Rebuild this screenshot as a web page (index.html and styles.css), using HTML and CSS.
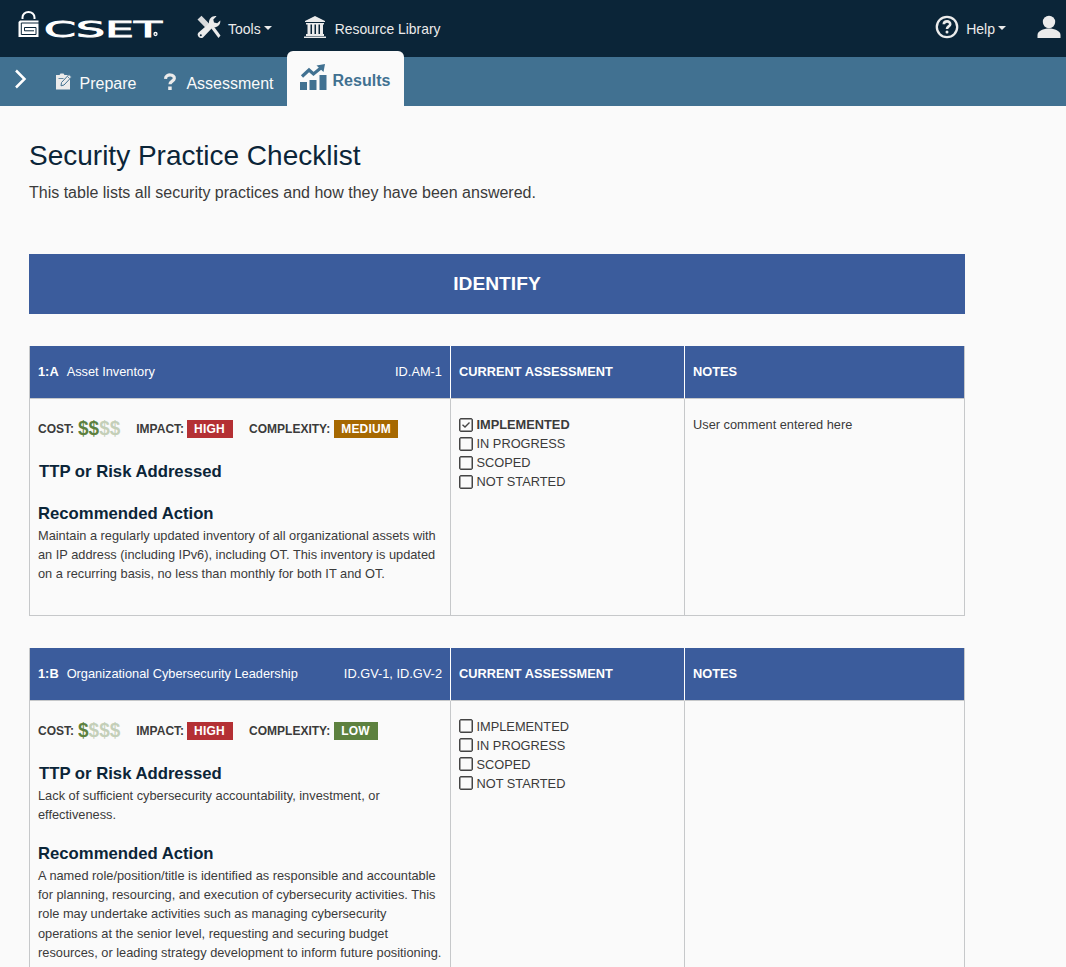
FILE: index.html
```html
<!DOCTYPE html>
<html lang="en">
<head>
<meta charset="utf-8">
<title>CSET - Security Practice Checklist</title>
<link rel="stylesheet" href="styles.css">
</head>
<body>
<header class="topbar">
  <svg class="logo" width="150" height="30" viewBox="0 0 150 30">
    <path d="M5.500 9V7.500a6 5.500 0 0 1 12 0V9" fill="none" stroke="#fff" stroke-width="2"/>
    <path d="M3 10.500h18.500V27h-20V12z" fill="#fff"/>
    <path d="M22 13H4.300v11.500H19V17.500H7.500v3.300H17" fill="none" stroke="#0b2538" stroke-width="1"/>
    <text class="logo-text" x="27" y="27" textLength="118" lengthAdjust="spacingAndGlyphs">CSET</text>
    <circle cx="138.500" cy="24" r="1.500" fill="#0b2538" stroke="#fff" stroke-width="1.300"/>
  </svg>
  <a class="item tools"><svg width="24" height="24" viewBox="0 0 24 24"><path d="M0.500 4.500L4.500 .8 13 9.500l-4 3.700z" fill="#d8dadc"/><path d="M14 13l2.500-2 7 9.500-2 2.500z" fill="#ebebeb"/><path d="M23.300 5.500c.4 4.500-3.500 7.500-7.300 6.500L6 22.500c-2.800 2-7-1.700-4.700-4.800L12 8.500C11.500 4 15 .5 19.500 1.200L16.300 4.500l.7 3 3.200.8z" fill="#ebebeb"/><circle cx="3.800" cy="20.200" r="1" fill="#0b2538"/></svg><span>Tools</span><i class="caret"></i></a>
  <a class="item library"><svg width="24" height="24" viewBox="0 0 24 24"><path d="M12 1l10 5v1H2V6zM3 8h18v1.500H3zM4.500 9h3v10h-3zM9 9h2.500v10H9zM13 9h2.500v10H13zM17 9h3v10h-3zM3 19h18v2H3zM1 21.500h22V23H1z" fill="#ebebeb"/></svg><span>Resource Library</span></a>
  <a class="item help"><svg width="24" height="24" viewBox="0 0 24 24"><circle cx="12" cy="12" r="10.200" fill="none" stroke="#ebebeb" stroke-width="2.300"/><path d="M8.800 9.300c.2-4 6.800-3.700 6.400 0-.2 2.100-3.200 2.200-3.200 4.700" fill="none" stroke="#ebebeb" stroke-width="2.600"/><circle cx="12" cy="17" r="1.500" fill="#ebebeb"/></svg><span>Help</span><i class="caret"></i></a>
  <svg class="user" width="24" height="24" viewBox="0 0 24 24"><circle cx="12" cy="7" r="6.200" fill="#ebebeb"/><path d="M.5 23v-3c0-4 6-6.500 11.500-6.500S23.500 16 23.500 20v3z" fill="#ebebeb"/></svg>
</header>
<nav class="tabs">
  <svg class="chevron" width="14" height="22" viewBox="0 0 14 22"><path d="M2 2.500l8.500 8.500L2 19.500" fill="none" stroke="#fff" stroke-width="2.500"/></svg>
  <a class="tab prepare"><svg width="18" height="18" viewBox="0 0 18 18"><path d="M1 2h3.500l1-1.500h3L9.500 2H13l2 1v13.500H1z" fill="#ebebeb"/><path d="M6.500 9.500L14 1.500l2.500 2.500-7.500 8-3 .8z" fill="#ebebeb" stroke="#417191" stroke-width="1"/><path d="M3.500 5.500h5M12.500 3.500l2 2" stroke="#417191" stroke-width=".8"/></svg><span>Prepare</span></a>
  <a class="tab assess"><svg width="14" height="18" viewBox="0 0 14 18"><path d="M2.500 5.800c.3-5.300 9.500-4.800 8.800-.3-.4 2.700-4.300 2.600-4.300 5.800" fill="none" stroke="#ebebeb" stroke-width="3.200"/><path d="M5.200 13.500h3.500v3.500H5.200z" fill="#ebebeb"/></svg><span>Assessment</span></a>
  <a class="tab active"><svg width="27" height="26" viewBox="0 0 27 26"><path d="M0 18h7v8H0zM9.500 16h7v10h-7zM19.500 11H26.500v15h-7z" fill="#417191"/><path d="M2 12.500L9 6l4.500 4L22 3" fill="none" stroke="#417191" stroke-width="3.200"/><path d="M16.500 1.500L25 0l-1.500 8z" fill="#417191"/></svg><span>Results</span></a>
</nav>
<main class="content">
  <h1>Security Practice Checklist</h1>
  <p class="intro">This table lists all security practices and how they have been answered.</p>
  <h2 class="function">IDENTIFY</h2>

  <section class="practice">
    <div class="cell head first"><b>1:A</b><span class="name">Asset Inventory</span><span class="ref">ID.AM-1</span></div>
    <div class="cell head"><b>CURRENT ASSESSMENT</b></div>
    <div class="cell head"><b>NOTES</b></div>
    <div class="cell detail">
      <div class="ratings"><span class="lbl">COST:</span><span class="cost"><span>$$</span><span class="off">$$</span></span><span class="lbl impact">IMPACT:</span><span class="badge high">HIGH</span><span class="lbl complexity">COMPLEXITY:</span><span class="badge medium">MEDIUM</span></div>
      <h3 class="ttp">TTP or Risk Addressed</h3>
      <p></p>
      <h3>Recommended Action</h3>
      <p>Maintain a regularly updated inventory of all organizational assets with<br>an IP address (including IPv6), including OT. This inventory is updated<br>on a recurring basis, no less than monthly for both IT and OT.</p>
    </div>
    <div class="cell answers">
      <div class="opt on"><i class="box"><svg width="10" height="8" viewBox="0 0 10 8"><path d="M1.500 3.700l2.500 2.300 4.500-4.500" fill="none" stroke="#444" stroke-width="1.400"/></svg></i>IMPLEMENTED</div>
      <div class="opt"><i class="box"></i>IN PROGRESS</div>
      <div class="opt"><i class="box"></i>SCOPED</div>
      <div class="opt"><i class="box"></i>NOT STARTED</div>
    </div>
    <div class="cell notes">User comment entered here</div>
  </section>

  <section class="practice">
    <div class="cell head first"><b>1:B</b><span class="name">Organizational Cybersecurity Leadership</span><span class="ref">ID.GV-1, ID.GV-2</span></div>
    <div class="cell head"><b>CURRENT ASSESSMENT</b></div>
    <div class="cell head"><b>NOTES</b></div>
    <div class="cell detail">
      <div class="ratings"><span class="lbl">COST:</span><span class="cost"><span>$</span><span class="off">$$$</span></span><span class="lbl impact">IMPACT:</span><span class="badge high">HIGH</span><span class="lbl complexity">COMPLEXITY:</span><span class="badge low">LOW</span></div>
      <h3 class="ttp">TTP or Risk Addressed</h3>
      <p>Lack of sufficient cybersecurity accountability, investment, or<br>effectiveness.</p>
      <h3>Recommended Action</h3>
      <p>A named role/position/title is identified as responsible and accountable<br>for planning, resourcing, and execution of cybersecurity activities. This<br>role may undertake activities such as managing cybersecurity<br>operations at the senior level, requesting and securing budget<br>resources, or leading strategy development to inform future positioning.</p>
    </div>
    <div class="cell answers">
      <div class="opt"><i class="box"></i>IMPLEMENTED</div>
      <div class="opt"><i class="box"></i>IN PROGRESS</div>
      <div class="opt"><i class="box"></i>SCOPED</div>
      <div class="opt"><i class="box"></i>NOT STARTED</div>
    </div>
    <div class="cell notes"></div>
  </section>
</main>
</body>
</html>
```

FILE: styles.css
```css
* { box-sizing: border-box; }
html, body { height: 967px; overflow: hidden; }
body { margin: 0; background: #fafafa; color: #3b3b3b; font-family: "Liberation Sans", Arial, sans-serif; font-size: 12.8px; line-height: 19.2px; }
h1, h2, h3, p { margin: 0; }
svg { display: block; flex: none; }

.topbar { display: flex; height: 57px; background: #0b2538; color: #ebebeb; font-size: 14px; }
.logo { margin: 10px 0 0 17px; overflow: visible; }
.logo-text { font-family: "DejaVu Sans", sans-serif; font-size: 21.500px; fill: #fff; stroke: #fff; stroke-width: .8px; }
.item { display: flex; align-items: flex-start; }
.item svg { margin-top: 15px; }
.item span { margin: 19px 0 0 7px; line-height: 20px; }
.caret { margin: 26px 0 0 3px; border: 4px solid transparent; border-top-color: #ebebeb; border-bottom: 0; }
.tools { margin-left: 30px; }
.library { margin-left: 31px; }
.library span { margin-left: 8px; font-size: 13.900px; }
.help { margin-left: auto; }
.user { margin: 15px 5px 0 31px; }

.tabs { display: flex; height: 49px; background: #417191; color: #fafafa; font-size: 16px; }
.chevron { margin: 11px 0 0 14px; }
.tab { display: flex; }
.tab span { line-height: 24px; margin-top: 15px; }
.tab svg { margin-top: 16px; }
.prepare { margin-left: 27px; }
.prepare span { margin-left: 6.500px; }
.assess { margin-left: 27px; }
.assess span { margin-left: 9px; }
.tab.active { width: 117px; height: 55px; margin: -6px 0 0 13px; padding-left: 13px; border-radius: 6px 6px 0 0; background: #fafafa; color: #417191; font-weight: bold; }
.active svg { margin-top: 13px; }
.tab.active span { margin: 18px 0 0 6px; }

.content { width: 965px; padding: 33px 0 0 29px; }
h1 { color: #0b2538; font-size: 28px; font-weight: 400; line-height: 34px; }
.intro { margin-top: 8px; font-size: 16px; line-height: 24px; }
.function { margin: 49px 0 32px; height: 60px; background: #3b5c9c; color: #fff; font-size: 19.2px; line-height: 60px; text-align: center; }

.practice { display: grid; grid-template-columns: 420px 234px 280px; margin-bottom: 32px; border: 1px solid #c6c8ca; border-top: 0; }
.cell { padding: 0 8px; border-left: 1px solid #c6c8ca; }
.cell:nth-child(3n+1) { border-left: 0; }
.head { display: flex; align-items: center; height: 53px; border-bottom: 1px solid #c6c8ca; border-left-color: #fff; background: #3b5c9c; color: #fff; }
.name { margin-left: 8px; }
.ref { margin-left: auto; }
.detail { padding-bottom: 31px; white-space: nowrap; }
.ratings { display: flex; align-items: center; height: 18px; margin: 21px 0 22px; font-weight: bold; font-size: 12px; line-height: 18px; }
.cost { margin-left: 4px; color: #5d813f; font-size: 19px; transform: scaleY(1.08); }
.cost .off { color: #c4cfb8; }
.impact { margin-left: 16px; }
.complexity { margin-left: 16px; }
.badge { margin-left: 3px; padding: 0 7px; color: #fff; letter-spacing: .2px; }
.high { background: #b43034; width: 46px; }
.medium { background: #a66800; width: 64px; margin-left: 4px; }
.low { background: #5d813f; width: 44px; margin-left: 4px; }
h3 { color: #0b2538; font-size: 16.700px; line-height: 24px; }
.ttp { padding-left: 1px; }
.detail p { margin-bottom: 18px; }
.detail p:last-child { margin-bottom: 0; }
.answers, .notes { padding-top: 16px; }
.opt { display: flex; align-items: center; height: 19px; }
.on { font-weight: bold; }
.box { display: flex; align-items: center; justify-content: center; width: 14px; height: 14px; margin-right: 3.500px; border: 1.500px solid #444; border-radius: 2px; box-shadow: inset 0 0 0 .5px #444; }
```
